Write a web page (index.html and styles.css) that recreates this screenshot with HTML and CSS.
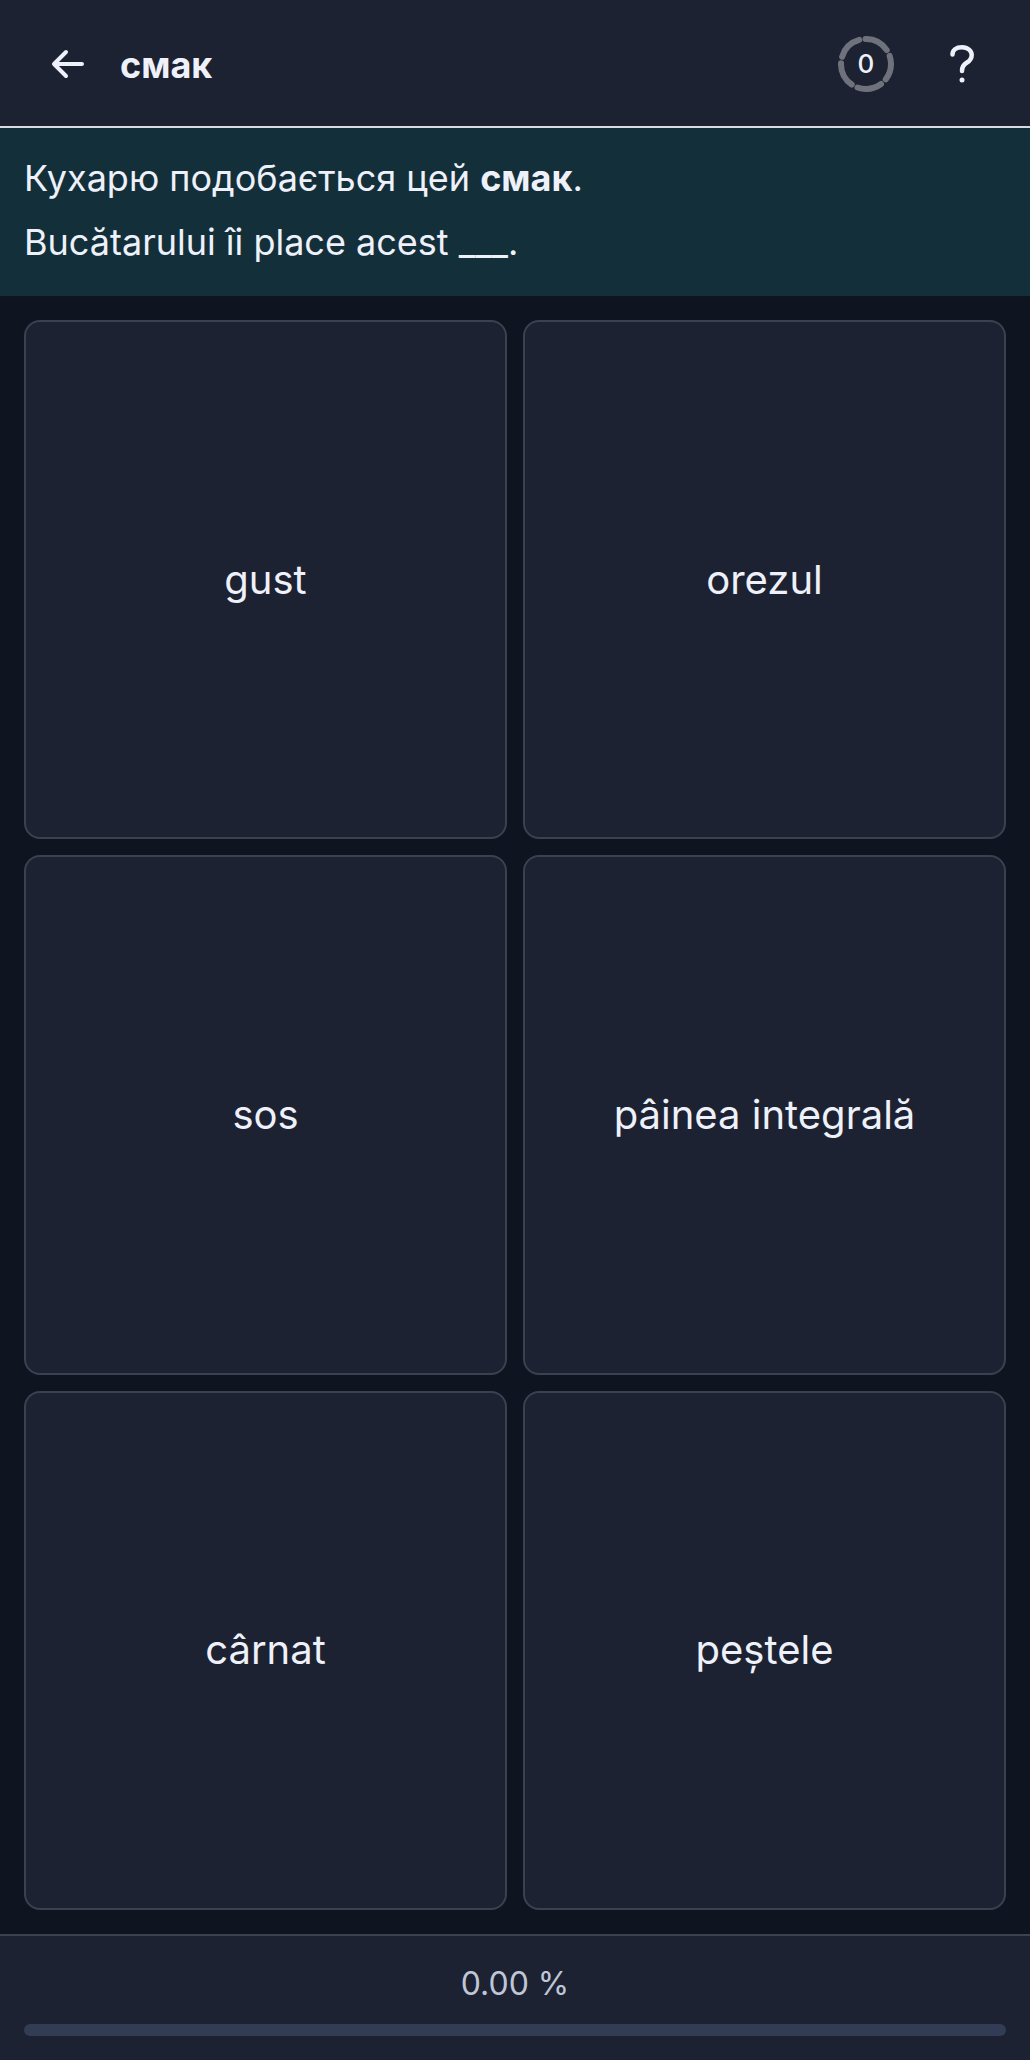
FILE: index.html
```html
<!DOCTYPE html>
<html lang="uk">
<head>
    <meta charset="UTF-8">
    <meta name="viewport" content="width=device-width, initial-scale=1.0">
    <title>смак</title>
    <link rel="stylesheet" href="styles.css">
</head>
<body>

<header class="topbar">
    <button class="icon-btn" type="button" aria-label="Назад">
        <svg width="48" height="48" viewBox="0 0 48 48" fill="none" stroke="currentColor" stroke-width="4" stroke-linecap="round" stroke-linejoin="round">
            <path d="M22 12 L10 24 L22 36 M10 24 H38"/>
        </svg>
    </button>
    <h1 class="title">смак</h1>
    <div class="counter">
        <svg class="ring" width="56" height="56" viewBox="0 0 56 56" fill="none">
            <circle cx="28" cy="28" r="25" pathLength="360" stroke="#6f727c" stroke-width="6" stroke-linecap="round" stroke-dasharray="57 15" transform="rotate(-91 28 28)"/>
        </svg>
        <span class="count">0</span>
    </div>
    <button class="icon-btn" type="button" aria-label="Довідка">
        <svg width="48" height="48" viewBox="0 0 48 48" fill="none" stroke="currentColor" stroke-width="4.5" stroke-linecap="round" stroke-linejoin="round">
            <path d="M14.5 14.5 C14.5 10 18 7.2 24 7.2 C30 7.2 33.7 11 33.7 15 C33.7 19 31.5 21 29 22.5 C25.5 24.5 24 26.5 24 31"/>
            <circle cx="24" cy="40" r="2.5" fill="currentColor" stroke="none"/>
        </svg>
    </button>
</header>

<section class="prompt">
    <p>Кухарю подобається цей <b>смак</b>.</p>
    <p lang="ro">Bucătarului îi place acest ___.</p>
</section>

<main class="answers" lang="ro">
    <button class="answer" type="button">gust</button>
    <button class="answer" type="button">orezul</button>
    <button class="answer" type="button">sos</button>
    <button class="answer" type="button">pâinea integrală</button>
    <button class="answer" type="button">cârnat</button>
    <button class="answer" type="button">peștele</button>
</main>

<footer class="footer">
    <label class="percent" for="progress">0.00 %</label>
    <progress class="progress" id="progress" value="0" max="100"></progress>
</footer>

</body>
</html>
```

FILE: styles.css
```css
* {
    box-sizing: border-box;
}
body {
    font-family: Inter, "Liberation Sans", sans-serif;
    display: flex;
    flex-direction: column;
    min-height: 100vh;
    margin: 0;
    background: #0e1521;
    color: #eef1fa;
}
button {
    font-family: inherit;
    color: inherit;
    cursor: pointer;
}
.topbar {
    display: flex;
    align-items: center;
    height: 128px;
    padding: 2px 44px 0;
    background: #1c2231;
    border-bottom: 2px solid #d9dbe0;
}
.icon-btn {
    display: flex;
    padding: 0;
    border: none;
    background: transparent;
}
.title {
    flex: 1;
    margin: 0;
    padding: 2px 0 0 28px;
    font-size: 36px;
    line-height: 48px;
    font-weight: 700;
}
.counter {
    display: grid;
    place-items: center;
    margin-right: 44px;
}
.ring, .count {
    grid-area: 1 / 1;
}
.count {
    font-size: 26px;
    line-height: 32px;
    font-weight: 500;
}
.prompt {
    padding: 18px 24px 22px;
    background: #13303a;
    font-size: 36px;
    line-height: 64px;
}
.prompt p {
    margin: 0;
}
.answers {
    flex: 1;
    display: grid;
    grid-template-columns: 1fr 1fr;
    grid-auto-rows: 1fr;
    gap: 16px;
    padding: 24px;
}
.answer {
    border: 2px solid #3c4150;
    border-radius: 16px;
    background: #1c2231;
    font-size: 40px;
    line-height: 48px;
}
.footer {
    display: flex;
    flex-direction: column;
    gap: 16px;
    padding: 24px;
    background: #1c2231;
    border-top: 2px solid #3c4150;
}
.percent {
    font-size: 32px;
    line-height: 48px;
    text-align: center;
    color: #bfc6d8;
}
.progress {
    display: block;
    width: 100%;
    height: 12px;
    appearance: none;
    border: none;
    border-radius: 6px;
    background: #333c55;
    overflow: hidden;
}
.progress::-webkit-progress-bar {
    background: #333c55;
}
.progress::-webkit-progress-value {
    background: #2dd4bf;
}
```
